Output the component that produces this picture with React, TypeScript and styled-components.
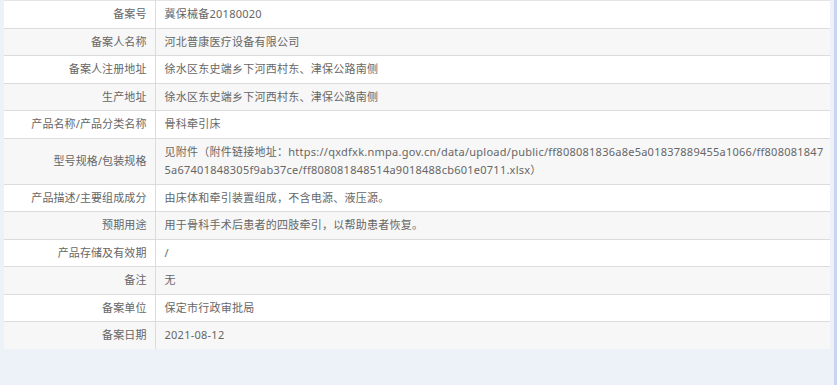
import styled, { createGlobalStyle } from "styled-components";

const GlobalStyle = createGlobalStyle`
  html, body {
    margin: 0;
    padding: 0;
    background: #edf2f9;
  }
  body {
    font-family: "Noto Sans", "Noto Sans CJK SC", sans-serif;
    font-size: 11px;
    color: #666;
  }
`;

const rows: [string, string][] = [
  ["备案号", "冀保械备20180020"],
  ["备案人名称", "河北普康医疗设备有限公司"],
  ["备案人注册地址", "徐水区东史端乡下河西村东、津保公路南侧"],
  ["生产地址", "徐水区东史端乡下河西村东、津保公路南侧"],
  ["产品名称/产品分类名称", "骨科牵引床"],
  [
    "型号规格/包装规格",
    "见附件（附件链接地址：https://qxdfxk.nmpa.gov.cn/data/upload/public/ff808081836a8e5a01837889455a1066/ff8080818475a67401848305f9ab37ce/ff808081848514a9018488cb601e0711.xlsx）",
  ],
  ["产品描述/主要组成成分", "由床体和牵引装置组成，不含电源、液压源。"],
  ["预期用途", "用于骨科手术后患者的四肢牵引，以帮助患者恢复。"],
  ["产品存储及有效期", "/"],
  ["备注", "无"],
  ["备案单位", "保定市行政审批局"],
  ["备案日期", "2021-08-12"],
];

export default function App() {
  return (
    <>
      <GlobalStyle />
      <Frame>
        <Table>
          <tbody>
            {rows.map(([label, value], i) => (
              <Row key={label} $striped={i % 2 === 1}>
                <Label>{label}</Label>
                <Value>{value}</Value>
              </Row>
            ))}
          </tbody>
        </Table>
      </Frame>
    </>
  );
}

const Frame = styled.div`
  min-height: 385px;
  box-sizing: border-box;
  padding: 0 4px;
  border-right: 3px solid #c5d6ee;
`;

const Table = styled.table`
  width: 826px;
  border-collapse: collapse;
  table-layout: fixed;
  border-top: 1px solid #e4e4e4;
`;

const Row = styled.tr<{ $striped: boolean }>`
  background: ${(p) => (p.$striped ? "#f7f7f7" : "#fff")};
  border-bottom: 1px solid #dcdcdc;

  &:last-child {
    border-bottom: none;
  }
`;

const Label = styled.td`
  width: 151px;
  box-sizing: border-box;
  text-align: right;
  padding: 4px 8px 4px 0;
  line-height: 18.5px;
  border-right: 1px solid #dcdcdc;
  color: #666;
  white-space: nowrap;
  letter-spacing: 0.1px;
`;

const Value = styled.td`
  padding: 4px 2px 4px 9px;
  line-height: 18.5px;
  color: #666;
  word-break: break-all;
  letter-spacing: 0.25px;
`;
